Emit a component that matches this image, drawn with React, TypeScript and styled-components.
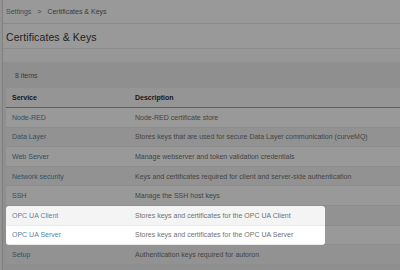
import { FC } from 'react';
import styled, { createGlobalStyle } from 'styled-components';

interface CertItem {
  service: string;
  description: string;
}

const items: CertItem[] = [
  { service: 'Node-RED', description: 'Node-RED certificate store' },
  {
    service: 'Data Layer',
    description: 'Stores keys that are used for secure Data Layer communication (curveMQ)',
  },
  { service: 'Web Server', description: 'Manage webserver and token validation credentials' },
  {
    service: 'Network security',
    description: 'Keys and certificates required for client and server-side authentication',
  },
  { service: 'SSH', description: 'Manage the SSH host keys' },
  { service: 'OPC UA Client', description: 'Stores keys and certificates for the OPC UA Client' },
  { service: 'OPC UA Server', description: 'Stores keys and certificates for the OPC UA Server' },
  { service: 'Setup', description: 'Authentication keys required for autoron' },
];

// index of the first highlighted row
const spotlightStart = 5;
const rowHeight = 19.6;

const GlobalStyle = createGlobalStyle`
  body {
    margin: 0;
    background: #fff;
    font-family: "Liberation Sans", Arial, sans-serif;
    overflow: hidden;
  }
`;

const Page = styled.div`
  display: flex;
  min-height: 270px;
`;

const LeftEdge = styled.div`
  width: 2px;
  background: #f6f6f6;
  border-right: 1px solid #d6d6d6;
`;

const Main = styled.div`
  flex: 1;
  display: flex;
  flex-direction: column;
`;

const Breadcrumbs = styled.nav`
  height: 23px;
  display: flex;
  align-items: center;
  gap: 6px;
  padding: 0 3px;
  font-size: 7px;
  color: #5c5c5c;
  border-bottom: 1px solid #e6e6e6;
`;

const Crumb = styled.span<{ link?: boolean }>`
  color: ${({ link }) => (link ? '#5a85a8' : '#666')};
`;

const Title = styled.h1`
  margin: 0;
  height: 24px;
  box-sizing: border-box;
  padding: 1px 3px 0;
  display: flex;
  align-items: center;
  font-size: 10.5px;
  font-weight: 400;
  letter-spacing: 0.1px;
  color: #3a3a3a;
`;

const Band = styled.div`
  height: 13px;
  border-top: 1px solid #e8e8e8;
  background: #fcfcfc;
`;

const Panel = styled.section`
  flex: 1;
  background: #eeeeee;
  padding-left: 3px;
`;

const Toolbar = styled.div`
  height: 26px;
  display: flex;
  align-items: center;
  padding-left: 9px;
  font-size: 7px;
  color: #666;
`;

const TableHead = styled.div`
  display: flex;
  height: 19px;
  align-items: center;
  background: #f8f8f8;
  border-bottom: 1px solid #9e9e9e;
`;

const TableBody = styled.div`
  position: relative;
`;

const Row = styled.div<{ striped?: boolean }>`
  display: flex;
  align-items: center;
  height: ${rowHeight}px;
  box-sizing: border-box;
  background: ${({ striped }) => (striped ? '#f4f4f4' : '#fff')};
  border-bottom: 1px solid #ebebeb;
`;

const Cell = styled.div<{ width?: number; head?: boolean; link?: boolean }>`
  ${({ width }) => (width ? `width: ${width}px;` : 'flex: 1;')}
  box-sizing: border-box;
  padding: 0 6px;
  white-space: nowrap;
  font-size: 7px;
  font-weight: ${({ head }) => (head ? 700 : 400)};
  color: ${({ head, link }) => (head ? '#2e2e2e' : link ? '#5a85a8' : '#727272')};
`;

const Spotlight = styled.div`
  position: absolute;
  left: 0;
  width: 319px;
  height: ${rowHeight * 2}px;
  border-radius: 3px;
  box-shadow: 0 0 0 2000px rgba(0, 0, 0, 0.4);
  pointer-events: none;
`;

const App: FC = () => (
  <>
    <GlobalStyle />
    <Page>
      <LeftEdge />
      <Main>
        <Breadcrumbs>
          <Crumb link>Settings</Crumb>
          <Crumb>&gt;</Crumb>
          <Crumb>Certificates &amp; Keys</Crumb>
        </Breadcrumbs>
        <Title>Certificates &amp; Keys</Title>
        <Band />
        <Panel>
          <Toolbar>8 items</Toolbar>
          <TableHead>
            <Cell head width={123}>
              Service
            </Cell>
            <Cell head>Description</Cell>
          </TableHead>
          <TableBody>
            {items.map((item, index) => (
              <Row key={item.service} striped={index % 2 === 1}>
                <Cell link width={123}>
                  {item.service}
                </Cell>
                <Cell>{item.description}</Cell>
              </Row>
            ))}
            <Spotlight style={{ top: spotlightStart * rowHeight }} />
          </TableBody>
        </Panel>
      </Main>
    </Page>
  </>
);

export default App;
